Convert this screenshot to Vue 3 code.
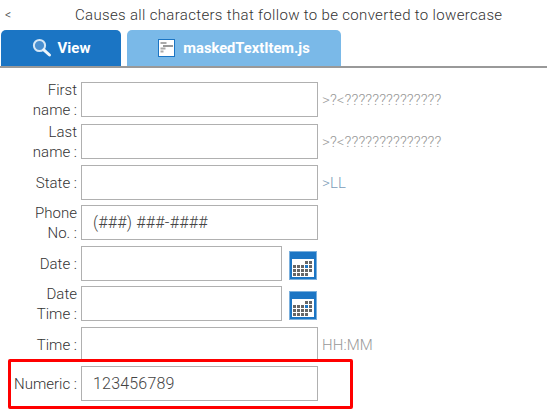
<script setup>
const rows = [
  { label: "First name :", hint: ">?<??????????????" },
  { label: "Last name :", hint: ">?<??????????????" },
  { label: "State :", hint: ">LL", blueHint: true },
  { label: "Phone No. :", value: "(###) ###-####" },
  { label: "Date :", short: true, calendar: true },
  { label: "Date Time :", short: true, calendar: true },
  { label: "Time :", hint: "HH:MM" },
  { label: "Numeric :", value: "123456789" },
];
// cells of the little calendar icon
const cells = [
  [3, 0], [4, 0],
  [0, 1], [1, 1], [2, 1], [3, 1], [4, 1],
  [0, 2], [1, 2], [2, 2], [3, 2], [4, 2],
  [0, 3], [1, 3], [2, 3], [3, 3],
];
</script>

<template>
  <div class="page">
    <div class="top">
      <span class="lt">&lt;</span>
      <span class="desc">Causes all characters that follow to be converted to lowercase</span>
    </div>

    <div class="tabs">
      <div class="tab active">
        <svg width="20" height="20" viewBox="0 0 20 20">
          <circle cx="7.5" cy="7.5" r="5.6" fill="#4a8fd0" stroke="#d6e7f6" stroke-width="2" />
          <path d="M11.8 11.8L17.5 17" stroke="#eef5fb" stroke-width="3" stroke-linecap="round" />
        </svg>
        <span>View</span>
      </div>
      <div class="tab">
        <svg width="17" height="18" viewBox="0 0 17 18">
          <rect x="0.5" y="0.5" width="16" height="17" fill="#fff" stroke="#1b75c4" />
          <path d="M2.5 4h6M2.5 9.5h5M2.5 12.5h3" stroke="#aaa" stroke-width="2" />
          <path d="M5 7h10" stroke="#555" stroke-width="1.2" />
        </svg>
        <span>maskedTextItem.js</span>
      </div>
    </div>

    <div class="form">
      <div v-for="r in rows" :key="r.label" class="row">
        <label class="lbl">{{ r.label }}</label>
        <div class="box" :class="{ short: r.short }">{{ r.value }}</div>
        <svg v-if="r.calendar" class="cal" width="28" height="29" viewBox="0 0 28 29">
          <rect width="28" height="29" fill="#1b75c4" />
          <rect x="0.5" y="0.5" width="27" height="28" fill="none" stroke="#7ab0de" />
          <rect x="3" y="8" width="22" height="18" fill="#fff" />
          <rect
            v-for="c in cells"
            :key="c.join()"
            :x="4 + c[0] * 4"
            :y="10 + c[1] * 4"
            width="3"
            height="3"
            :fill="c[0] === 3 && c[1] === 1 ? '#1b75c4' : '#666'"
          />
        </svg>
        <span v-if="r.hint" class="hint" :class="{ blue: r.blueHint }">{{ r.hint }}</span>
      </div>
    </div>

    <div class="marker"></div>
  </div>
</template>

<style scoped>
.page {
  position: relative;
  width: 547px;
  height: 418px;
  overflow: hidden;
  background: #fff;
  font-family: Roboto, "Liberation Sans", sans-serif;
  font-weight: 300;
  color: #444;
}

.top {
  display: flex;
  height: 30px;
  padding-top: 6px;
  box-sizing: border-box;
  font-size: 15px;
  line-height: 18px;
}
.lt {
  width: 75px;
  padding-left: 5px;
  box-sizing: border-box;
  font-size: 12px;
}
.desc {
  font-weight: 300;
  letter-spacing: 0.33px;
  color: #333;
}

.tabs {
  display: flex;
  gap: 6px;
  height: 38px;
  padding-left: 1px;
  border-bottom: 2px solid #999;
  box-sizing: border-box;
}
.tab {
  display: flex;
  align-items: center;
  justify-content: center;
  gap: 8px;
  width: 214px;
  height: 36px;
  background: #7ab9e8;
  border-radius: 5px 5px 0 0;
  color: #fff;
  font-size: 14.7px;
  font-weight: 700;
}
.tab.active {
  width: 120px;
  background: #1b75c4;
  font-size: 15px;
  gap: 6px;
}

.form {
  display: flex;
  flex-direction: column;
  padding-top: 14px;
}
.row {
  display: flex;
  align-items: center;
  height: 35px;
  margin-bottom: 6px;
}
.row:nth-child(1) {
  margin-bottom: 7px;
}
.row:nth-child(3),
.row:nth-child(5) {
  margin-bottom: 5px;
}
.row:nth-child(7) {
  margin-bottom: 4px;
}
.lbl {
  width: 66px;
  margin-left: 11px;
  margin-right: 4px;
  text-align: right;
  font-size: 15px;
  line-height: 20px;
  font-weight: 300;
  color: #333;
  flex: none;
}
.box {
  width: 237px;
  height: 35px;
  flex: none;
  padding-left: 11px;
  border: 1px solid #b0b0b0;
  box-sizing: border-box;
  font-size: 16px;
  letter-spacing: 0.2px;
  line-height: 33px;
  color: #444;
}
.box.short {
  width: 201px;
}
.cal {
  margin-left: 7px;
  margin-top: 3px;
}
.hint {
  margin-left: 4px;
  font-size: 15px;
  letter-spacing: 0.1px;
  color: #999;
}
.hint.blue {
  color: #7a9cb8;
}

.marker {
  position: absolute;
  left: 8px;
  top: 359px;
  width: 345px;
  height: 50px;
  border: 3px solid #f00;
  box-sizing: border-box;
  border-radius: 2px;
}
</style>
